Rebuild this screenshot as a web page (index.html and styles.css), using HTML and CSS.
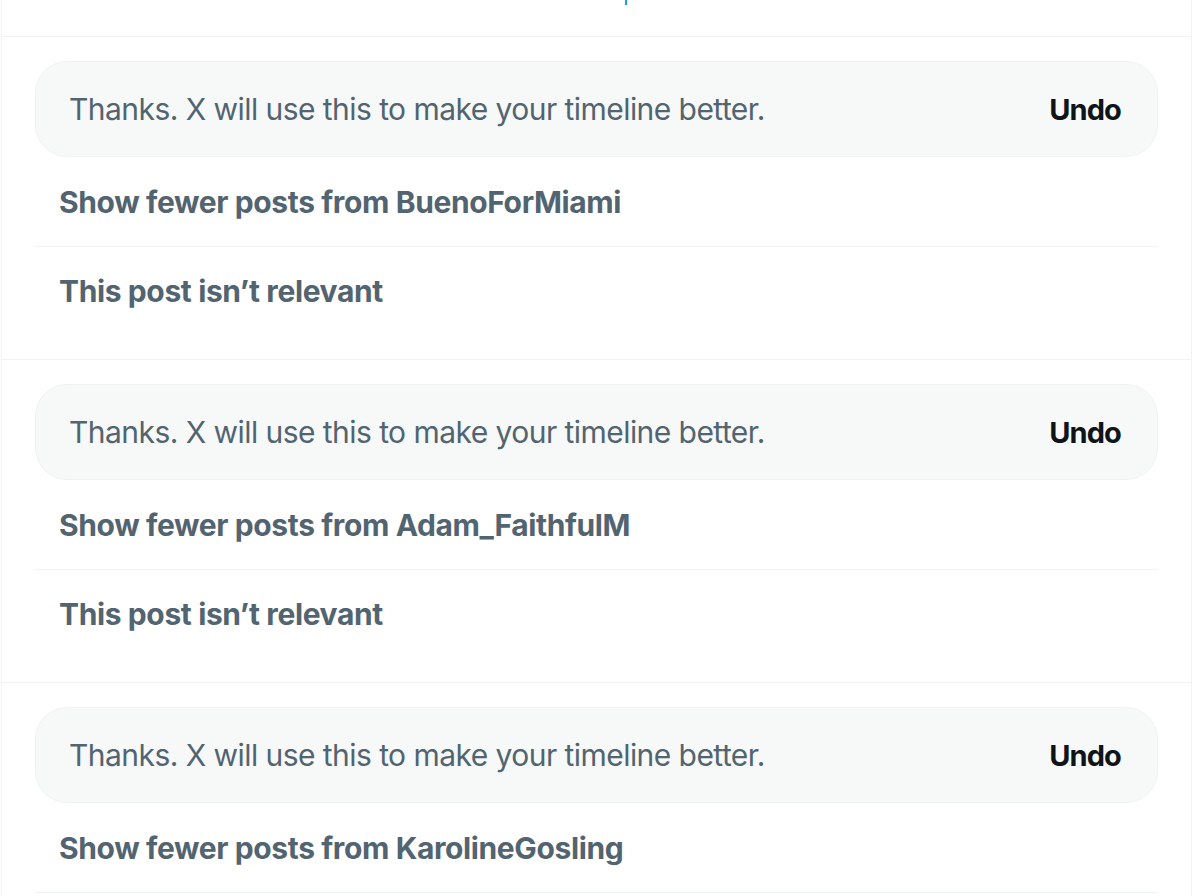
FILE: index.html
```html
<!DOCTYPE html>
<html>
<head>
<meta charset="utf-8">
<link rel="stylesheet" href="styles.css">
</head>
<body>
<div class="column">
  <div class="top"><span class="more-tail"></span></div>

  <section class="feedback">
    <div class="notice">
      <span class="notice-text">Thanks. X will use this to make your timeline better.</span>
      <span class="undo">Undo</span>
    </div>
    <div class="option">Show fewer posts from BuenoForMiami</div>
    <div class="option">This post isn’t relevant</div>
  </section>

  <section class="feedback">
    <div class="notice">
      <span class="notice-text">Thanks. X will use this to make your timeline better.</span>
      <span class="undo">Undo</span>
    </div>
    <div class="option">Show fewer posts from Adam_FaithfulM</div>
    <div class="option">This post isn’t relevant</div>
  </section>

  <section class="feedback last">
    <div class="notice">
      <span class="notice-text">Thanks. X will use this to make your timeline better.</span>
      <span class="undo">Undo</span>
    </div>
    <div class="option">Show fewer posts from KarolineGosling</div>
  </section>
</div>
</body>
</html>
```
FILE: styles.css
```css
html, body {
  margin: 0;
  padding: 0;
  background: #ffffff;
}
body {
  font-family: Inter, "Noto Sans", "Liberation Sans", sans-serif;
  overflow: hidden;
  height: 896px;
}
.column {
  margin-left: 1px;
  width: 1189px;
  border-left: 1px solid #eff3f4;
  border-right: 1px solid #eff3f4;
  min-height: 896px;
}
.top {
  height: 36px;
  border-bottom: 1px solid #eff3f4;
  display: flex;
  align-items: flex-start;
}
.more-tail {
  display: block;
  width: 2px;
  height: 5px;
  margin-left: 623px;
  background: #1d9bf0;
}
.feedback {
  padding: 24px 33px 24px 33px;
  border-bottom: 1px solid #eff3f4;
}
.feedback.last {
  border-bottom: none;
  padding-bottom: 0;
}
.notice {
  box-sizing: border-box;
  height: 96px;
  background: #f7f9f9;
  border: 1px solid #eff3f4;
  border-radius: 32px;
  display: flex;
  align-items: center;
  justify-content: space-between;
  padding: 0 36px 0 33px;
}
.notice-text {
  font-size: 30px;
  color: #536471;
  font-weight: 400;
  letter-spacing: -0.55px;
}
.undo {
  font-size: 29px;
  font-weight: 700;
  color: #0f1419;
  letter-spacing: -0.9px;
}
.option {
  height: 88px;
  display: flex;
  align-items: center;
  padding: 0 24px;
  font-size: 30px;
  font-weight: 700;
  color: #536471;
  letter-spacing: -0.38px;
}
.notice + .option {
  height: 89px;
  border-bottom: 1px solid #eff3f4;
}
```
